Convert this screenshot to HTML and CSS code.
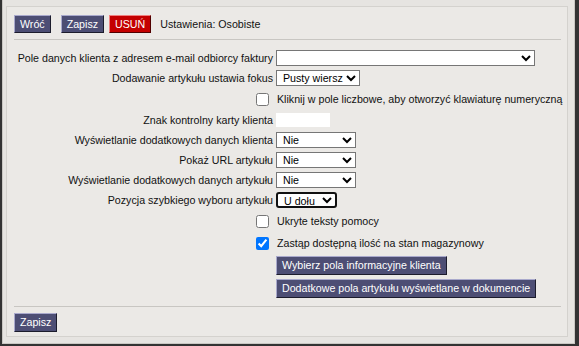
FILE: index.html
```html
<!DOCTYPE html>
<html lang="pl">
<head>
  <meta charset="UTF-8">
  <title>Ustawienia: Osobiste</title>
  <link rel="stylesheet" href="styles.css">
</head>
<body>
<div class="dialog">
  <div class="panel">
    <div class="toolbar">
      <button class="btn btn-back">Wróć</button>
      <button class="btn">Zapisz</button>
      <button class="btn btn-danger">USUŃ</button>
      <span class="title">Ustawienia: Osobiste</span>
    </div>

    <div class="form">
      <div class="row">
        <label class="lbl">Pole danych klienta z adresem e-mail odbiorcy faktury</label>
        <div class="ctl"><select class="sel sel-wide"><option></option></select></div>
      </div>
      <div class="row">
        <label class="lbl">Dodawanie artykułu ustawia fokus</label>
        <div class="ctl"><select class="sel"><option>Pusty wiersz</option></select></div>
      </div>
      <div class="row row-check">
        <div class="lbl"><input type="checkbox" class="chk"></div>
        <div class="ctl"><span class="chk-text">Kliknij w pole liczbowe, aby otworzyć klawiaturę numeryczną</span></div>
      </div>
      <div class="row">
        <label class="lbl">Znak kontrolny karty klienta</label>
        <div class="ctl"><input type="text" class="txt"></div>
      </div>
      <div class="row">
        <label class="lbl">Wyświetlanie dodatkowych danych klienta</label>
        <div class="ctl"><select class="sel sel-nie"><option>Nie</option></select></div>
      </div>
      <div class="row">
        <label class="lbl">Pokaż URL artykułu</label>
        <div class="ctl"><select class="sel sel-nie"><option>Nie</option></select></div>
      </div>
      <div class="row">
        <label class="lbl">Wyświetlanie dodatkowych danych artykułu</label>
        <div class="ctl"><select class="sel sel-nie"><option>Nie</option></select></div>
      </div>
      <div class="row">
        <label class="lbl">Pozycja szybkiego wyboru artykułu</label>
        <div class="ctl"><select class="sel sel-focus"><option>U dołu</option></select></div>
      </div>
      <div class="row row-check">
        <div class="lbl"><input type="checkbox" class="chk"></div>
        <div class="ctl"><span class="chk-text">Ukryte teksty pomocy</span></div>
      </div>
      <div class="row row-check">
        <div class="lbl"><input type="checkbox" class="chk" checked></div>
        <div class="ctl"><span class="chk-text">Zastąp dostępną ilość na stan magazynowy</span></div>
      </div>
      <div class="row row-btn">
        <div class="lbl"></div>
        <div class="ctl"><button class="btn">Wybierz pola informacyjne klienta</button></div>
      </div>
      <div class="row row-btn">
        <div class="lbl"></div>
        <div class="ctl"><button class="btn">Dodatkowe pola artykułu wyświetlane w dokumencie</button></div>
      </div>
    </div>

    <div class="footer">
      <button class="btn">Zapisz</button>
    </div>
  </div>
</div>
</body>
</html>
```

FILE: styles.css
```css
body {
  margin: 0;
  padding: 0 4px 2px 2px;
  background-color: #333;
  font-family: 'Liberation Sans', Arial, sans-serif;
  font-size: 8pt;
  color: #111;
}

.dialog {
  height: 344px;
  box-sizing: border-box;
  background-color: #e6e4e1;
  border: 1px solid #c9c7c3;
  border-top: none;
  padding: 6px 6px 6px 3px;
}

.panel {
  height: 100%;
  box-sizing: border-box;
  background-color: #ebe9e6;
  border: 1px solid #d4d2ce;
  padding: 8px 6px 0 7px;
}

/* top bar */
.toolbar {
  display: flex;
  align-items: center;
  gap: 5px;
  padding-bottom: 6px;
  border-bottom: 1px solid #c8c6c2;
}

.btn {
  font-family: 'Liberation Sans', Arial, sans-serif;
  font-size: 8pt;
  line-height: 14px;
  color: #fff;
  background-color: #4d4e74;
  border: 1px solid;
  border-color: #a9a9cc #1c1c2c #1c1c2c #a9a9cc;
  padding: 1px 5px 2px;
  margin: 0;
  white-space: nowrap;
  cursor: pointer;
}

.toolbar .btn {
  padding: 1px 5px 1px;
}

.btn-back {
  margin-right: 5px;
}

.btn-danger {
  background-color: #c40000;
  border-color: #f08080 #500000 #500000 #f08080;
  padding: 1px 6px;
}

.title {
  margin-left: 4px;
}

/* settings rows */
.form {
  padding-top: 8px;
  padding-bottom: 6px;
  border-bottom: 1px solid #c8c6c2;
}

.row {
  display: grid;
  grid-template-columns: 259px 1fr;
  column-gap: 3px;
  align-items: center;
  height: 20px;
}

.row-check {
  height: 22px;
}

.row-btn {
  height: 23px;
}

.lbl {
  text-align: right;
  white-space: nowrap;
}

.ctl {
  display: flex;
  align-items: center;
  white-space: nowrap;
}

.sel {
  font-family: 'Liberation Sans', Arial, sans-serif;
  font-size: 8pt;
  color: #000;
  background-color: #fff;
  border: 1px solid #767676;
  height: 16px;
  padding: 0 0 0 2px;
  margin: 0;
}

.sel-wide {
  width: 259px;
}

.sel-nie {
  width: 80px;
}

.sel-focus {
  width: 61px;
  border: 2px solid #111;
  border-radius: 3px;
}

.chk {
  width: 13px;
  height: 13px;
  margin: 0 4px 0 0;
  vertical-align: middle;
  accent-color: #0075ff;
}

.chk-text {
  padding-left: 1px;
}

.txt {
  width: 54px;
  height: 14px;
  box-sizing: border-box;
  border: none;
  background-color: #fff;
  padding: 0;
  margin: 0;
}

.footer {
  padding-top: 6px;
}
```
